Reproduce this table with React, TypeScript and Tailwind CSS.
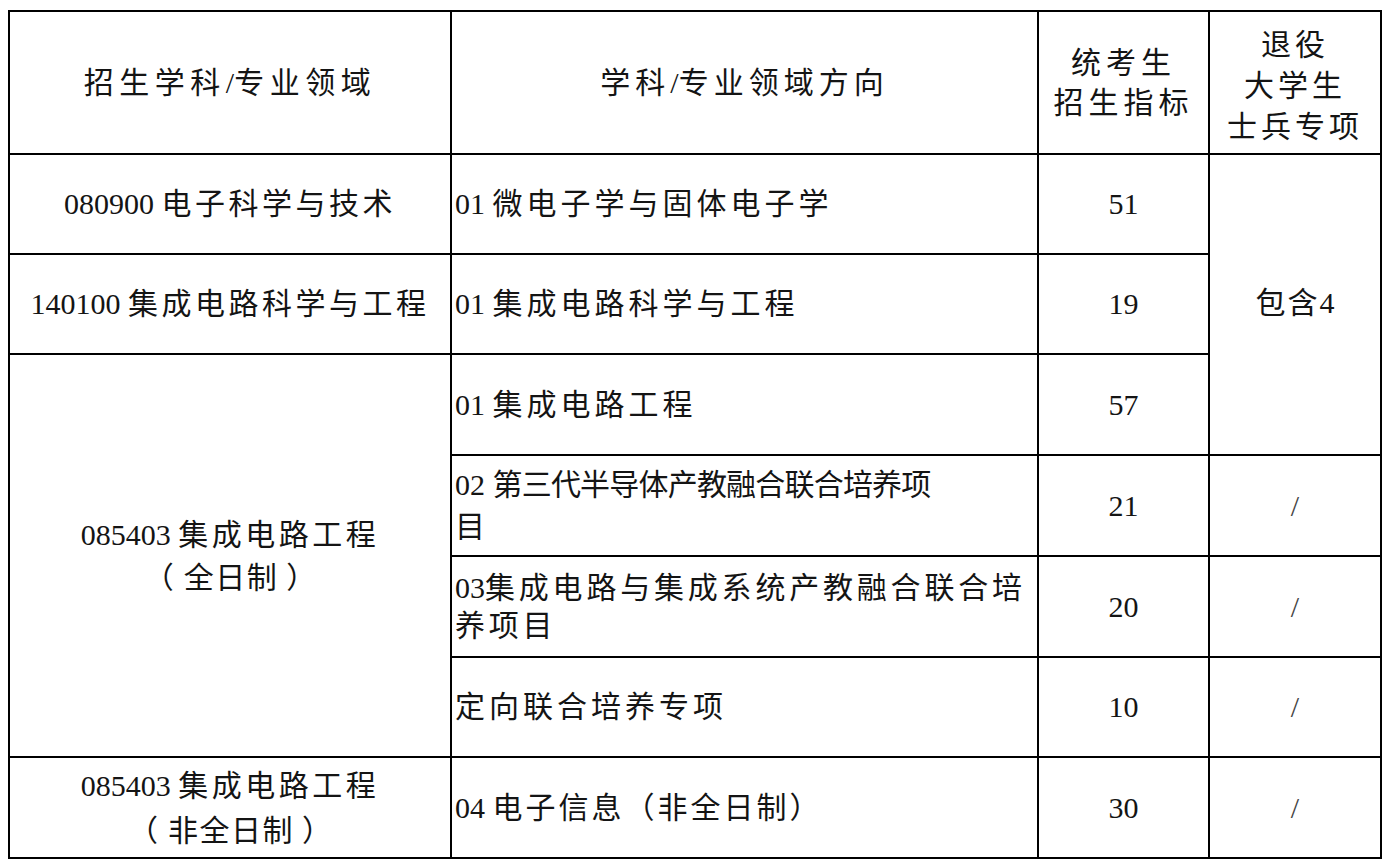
import React from "react";

function T({ s }: { s: string }) {
  const parts = s.split(/([\x00-\x7F]+)/).filter(Boolean);
  return (
    <>
      {parts.map((p, i) =>
        /^[\x00-\x7F]+$/.test(p) ? (
          <span key={i} className="tracking-normal">
            {p}
          </span>
        ) : (
          <span key={i}>{p}</span>
        )
      )}
    </>
  );
}

function Paren({ s }: { s: string }) {
  return (
    <span className="tracking-normal">
      <span className="mr-[10px]">（</span>
      <span className="tracking-[1.5px]">{s}</span>
      <span className="ml-[8px]">）</span>
    </span>
  );
}

const cell = "border-2 border-black p-0 align-middle";

export default function App() {
  return (
    <div
      className="min-h-[865px] w-[1389px] bg-white pl-[8px] pt-[10px] text-[#141414]"
      style={{ fontFamily: '"Liberation Serif", "Noto Sans CJK SC", serif' }}
    >
      <table className="w-[1372px] table-fixed border-collapse border-2 border-black text-[30px] font-normal leading-[42px]">
        <colgroup>
          <col className="w-[442px]" />
          <col className="w-[587px]" />
          <col className="w-[171px]" />
          <col className="w-[172px]" />
        </colgroup>
        <tbody>
          <tr className="h-[143px]">
            <td className={`${cell} text-center tracking-[5.5px]`}>
              <T s="招生学科/专业领域" />
            </td>
            <td className={`${cell} text-center tracking-[5px]`}>
              <T s="学科/专业领域方向" />
            </td>
            <td className={`${cell} text-center leading-[40px] tracking-[5px]`}>
              统考生
              <br />
              招生指标
            </td>
            <td className={`${cell} pt-[5px] text-center leading-[41px] tracking-[4px]`}>
              退役
              <br />
              大学生
              <br />
              士兵专项
            </td>
          </tr>
          <tr className="h-[100px]">
            <td className={`${cell} text-center tracking-[3.5px]`}>
              <T s="080900 电子科学与技术" />
            </td>
            <td className={`${cell} pl-[3px] text-left tracking-[4px] whitespace-nowrap`}>
              <T s="01 微电子学与固体电子学" />
            </td>
            <td className={`${cell} text-center`}>51</td>
            <td rowSpan={3} className={`${cell} pb-[4px] text-center tracking-[2px]`}>
              <T s="包含4" />
            </td>
          </tr>
          <tr className="h-[100px]">
            <td className={`${cell} text-center tracking-[3.5px] whitespace-nowrap`}>
              <T s="140100 集成电路科学与工程" />
            </td>
            <td className={`${cell} pl-[3px] text-left tracking-[4px] whitespace-nowrap`}>
              <T s="01 集成电路科学与工程" />
            </td>
            <td className={`${cell} text-center`}>19</td>
          </tr>
          <tr className="h-[101px]">
            <td rowSpan={4} className={`${cell} text-center leading-[43px] tracking-[3.5px] whitespace-nowrap`}>
              <T s="085403 集成电路工程" />
              <br />
              <Paren s="全日制" />
            </td>
            <td className={`${cell} pl-[3px] text-left tracking-[4px] whitespace-nowrap`}>
              <T s="01 集成电路工程" />
            </td>
            <td className={`${cell} text-center`}>57</td>
          </tr>
          <tr className="h-[101px]">
            <td className={`${cell} pl-[3px] text-left tracking-[-0.8px] whitespace-nowrap`}>
              <T s="02 第三代半导体产教融合联合培养项" />
              <br />目
            </td>
            <td className={`${cell} text-center`}>21</td>
            <td className={`${cell} text-center text-[#444]`}>/</td>
          </tr>
          <tr className="h-[101px]">
            <td className={`${cell} pl-[3px] text-left leading-[38px] tracking-[3.8px] whitespace-nowrap`}>
              <T s="03集成电路与集成系统产教融合联合培" />
              <br />
              养项目
            </td>
            <td className={`${cell} text-center`}>20</td>
            <td className={`${cell} text-center text-[#444]`}>/</td>
          </tr>
          <tr className="h-[100px]">
            <td className={`${cell} pl-[3px] text-left tracking-[4px] whitespace-nowrap`}>
              定向联合培养专项
            </td>
            <td className={`${cell} text-center`}>10</td>
            <td className={`${cell} text-center text-[#444]`}>/</td>
          </tr>
          <tr className="h-[101px]">
            <td className={`${cell} text-center leading-[45px] tracking-[3.5px] whitespace-nowrap`}>
              <T s="085403 集成电路工程" />
              <br />
              <Paren s="非全日制" />
            </td>
            <td className={`${cell} pl-[3px] text-left tracking-[3px] whitespace-nowrap`}>
              <T s="04 电子信息（非全日制）" />
            </td>
            <td className={`${cell} text-center`}>30</td>
            <td className={`${cell} text-center text-[#444]`}>/</td>
          </tr>
        </tbody>
      </table>
    </div>
  );
}
